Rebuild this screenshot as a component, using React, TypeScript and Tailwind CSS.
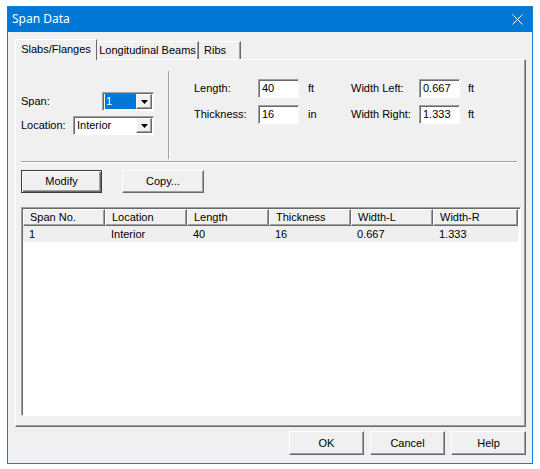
import React from 'react';

// classic 3D borders
const raised =
  'border border-t-white border-l-white border-r-[#696969] border-b-[#696969] shadow-[inset_-1px_-1px_0_#a0a0a0]';
const sunken =
  'border border-t-[#a0a0a0] border-l-[#a0a0a0] border-r-white border-b-white shadow-[inset_1px_1px_0_#696969]';

function Arrow() {
  return (
    <svg width="7" height="4" viewBox="0 0 7 4" className="block">
      <path d="M0 0h7L3.5 4z" fill="#000" />
    </svg>
  );
}

function Combo({ value, width, highlight }: { value: string; width: string; highlight?: boolean }) {
  return (
    <div className={`${sunken} ${width} h-[19px] bg-white flex items-stretch p-[1px]`}>
      <div className="flex-1 flex items-center pl-[1px]">
        <span
          className={
            highlight
              ? 'bg-[#0078d7] text-white h-[15px] w-full flex items-center pl-[1px]'
              : 'pl-[1px]'
          }
        >
          {value}
        </span>
      </div>
      <div className={`${raised} w-[16px] bg-[#f0f0f0] flex items-center justify-center`}>
        <Arrow />
      </div>
    </div>
  );
}

function Field({ value }: { value: string }) {
  return (
    <div className={`${sunken} w-[41px] h-[19px] bg-white flex items-center pl-[3px]`}>{value}</div>
  );
}

function Button({ label, w, h = 'h-[23px]', def }: { label: string; w: string; h?: string; def?: boolean }) {
  return (
    <div
      className={`${w} ${h} flex items-center justify-center bg-[#f0f0f0] ${
        def
          ? 'border border-[#3c3c3c] shadow-[inset_1px_1px_0_#fff,inset_-1px_-1px_0_#696969,inset_-2px_-2px_0_#a0a0a0]'
          : raised
      }`}
    >
      {label}
    </div>
  );
}

const columns = ['Span No.', 'Location', 'Length', 'Thickness', 'Width-L', 'Width-R'];
const rows = [['1', 'Interior', '40', '16', '0.667', '1.333']];

export default function App() {
  return (
    <div className="w-[540px] h-[469px] bg-white pt-[6px] pl-[7px] text-[11px] leading-none text-black font-['Liberation_Sans',Arial,sans-serif]">
      <div className="w-[526px] h-[458px] border border-[#1a7cd3] flex flex-col">
        {/* title bar */}
        <div className="h-[25px] bg-[#0078d7] flex items-center justify-between pl-[4px] pr-[9px]">
          <span className="text-white text-[12px] font-['Noto_Sans',sans-serif] mt-[-1px]">Span Data</span>
          <svg width="11" height="11" viewBox="0 0 11 11">
            <path d="M0.5 0.5l10 10M10.5 0.5l-10 10" stroke="#fff" strokeWidth="1" />
          </svg>
        </div>

        {/* client */}
        <div className="flex-1 bg-[#f0f0f0] pt-[7px] pl-[7px] pr-[6px] flex flex-col">
          {/* tabs */}
          <div className="flex items-end h-[20px] relative z-10">
            <div className="w-[82px] h-[21px] mb-[-1px] bg-[#f0f0f0] border-t border-l border-r border-t-white border-l-white border-r-[#696969] flex items-center justify-center pb-[2px]">
              Slabs/Flanges
            </div>
            <div className="w-[102px] h-[18px] border-t border-r border-t-white border-r-[#696969] shadow-[inset_-1px_0_0_#a0a0a0] flex items-center justify-center">
              Longitudinal Beams
            </div>
            <div className="w-[42px] h-[18px] border-t border-r border-t-white border-r-[#696969] shadow-[inset_-1px_0_0_#a0a0a0] flex items-center justify-start pl-[5px]">
              Ribs
            </div>
          </div>

          {/* tab panel */}
          <div className={`${raised} h-[368px] px-[5px] flex flex-col`}>
            <div className="flex h-[101px]">
              <div className="w-[147px] pt-[32px] flex flex-col gap-[5px]">
                <div className="flex items-center h-[19px]">
                  <span className="w-[81px]">Span:</span>
                  <Combo value="1" width="w-[52px]" highlight />
                </div>
                <div className="flex items-center h-[19px]">
                  <span className="w-[52px]">Location:</span>
                  <Combo value="Interior" width="w-[81px]" />
                </div>
              </div>
              <div className="mt-[11px] mb-[2px] w-[2px] border-l border-l-[#a0a0a0] border-r border-r-white" />
              <div className="pl-[24px] pt-[19px] grid grid-cols-[64px_41px_52px_68px_41px_20px] grid-rows-[19px_19px] gap-y-[7px] items-center">
                <span>Length:</span>
                <Field value="40" />
                <span className="pl-[9px]">ft</span>
                <span>Width Left:</span>
                <Field value="0.667" />
                <span className="pl-[8px]">ft</span>
                <span>Thickness:</span>
                <Field value="16" />
                <span className="pl-[9px]">in</span>
                <span>Width Right:</span>
                <Field value="1.333" />
                <span className="pl-[8px]">ft</span>
              </div>
            </div>

            <div className="w-[496px] h-[2px] border-t border-t-[#a0a0a0] border-b border-b-white" />

            <div className="flex gap-[20px] mt-[7px]">
              <Button label="Modify" w="w-[81px]" def />
              <Button label="Copy..." w="w-[82px]" />
            </div>

            {/* list view */}
            <div className={`${sunken} mt-[14px] w-[500px] h-[209px] bg-white p-[1px] overflow-hidden`}>
              <div className="flex h-[17px]">
                {columns.map((c, i) => (
                  <div
                    key={c}
                    className={`${raised} ${i === 5 ? 'w-[85px]' : 'w-[82px]'} bg-[#f0f0f0] flex items-center pl-[6px]`}
                  >
                    {c}
                  </div>
                ))}
              </div>
              {rows.map((r, ri) => (
                <div key={ri} className="flex h-[16px] bg-[#efefef] w-[495px]">
                  {r.map((v, i) => (
                    <div key={i} className={`${i === 5 ? 'w-[85px]' : 'w-[82px]'} flex items-center pl-[6px]`}>
                      {v}
                    </div>
                  ))}
                </div>
              ))}
            </div>
          </div>

          {/* dialog buttons */}
          <div className="flex justify-end gap-[6px] mt-[4px]">
            <Button label="OK" w="w-[75px]" h="h-[24px]" />
            <Button label="Cancel" w="w-[75px]" h="h-[24px]" />
            <Button label="Help" w="w-[75px]" h="h-[24px]" />
          </div>
        </div>
      </div>
    </div>
  );
}
